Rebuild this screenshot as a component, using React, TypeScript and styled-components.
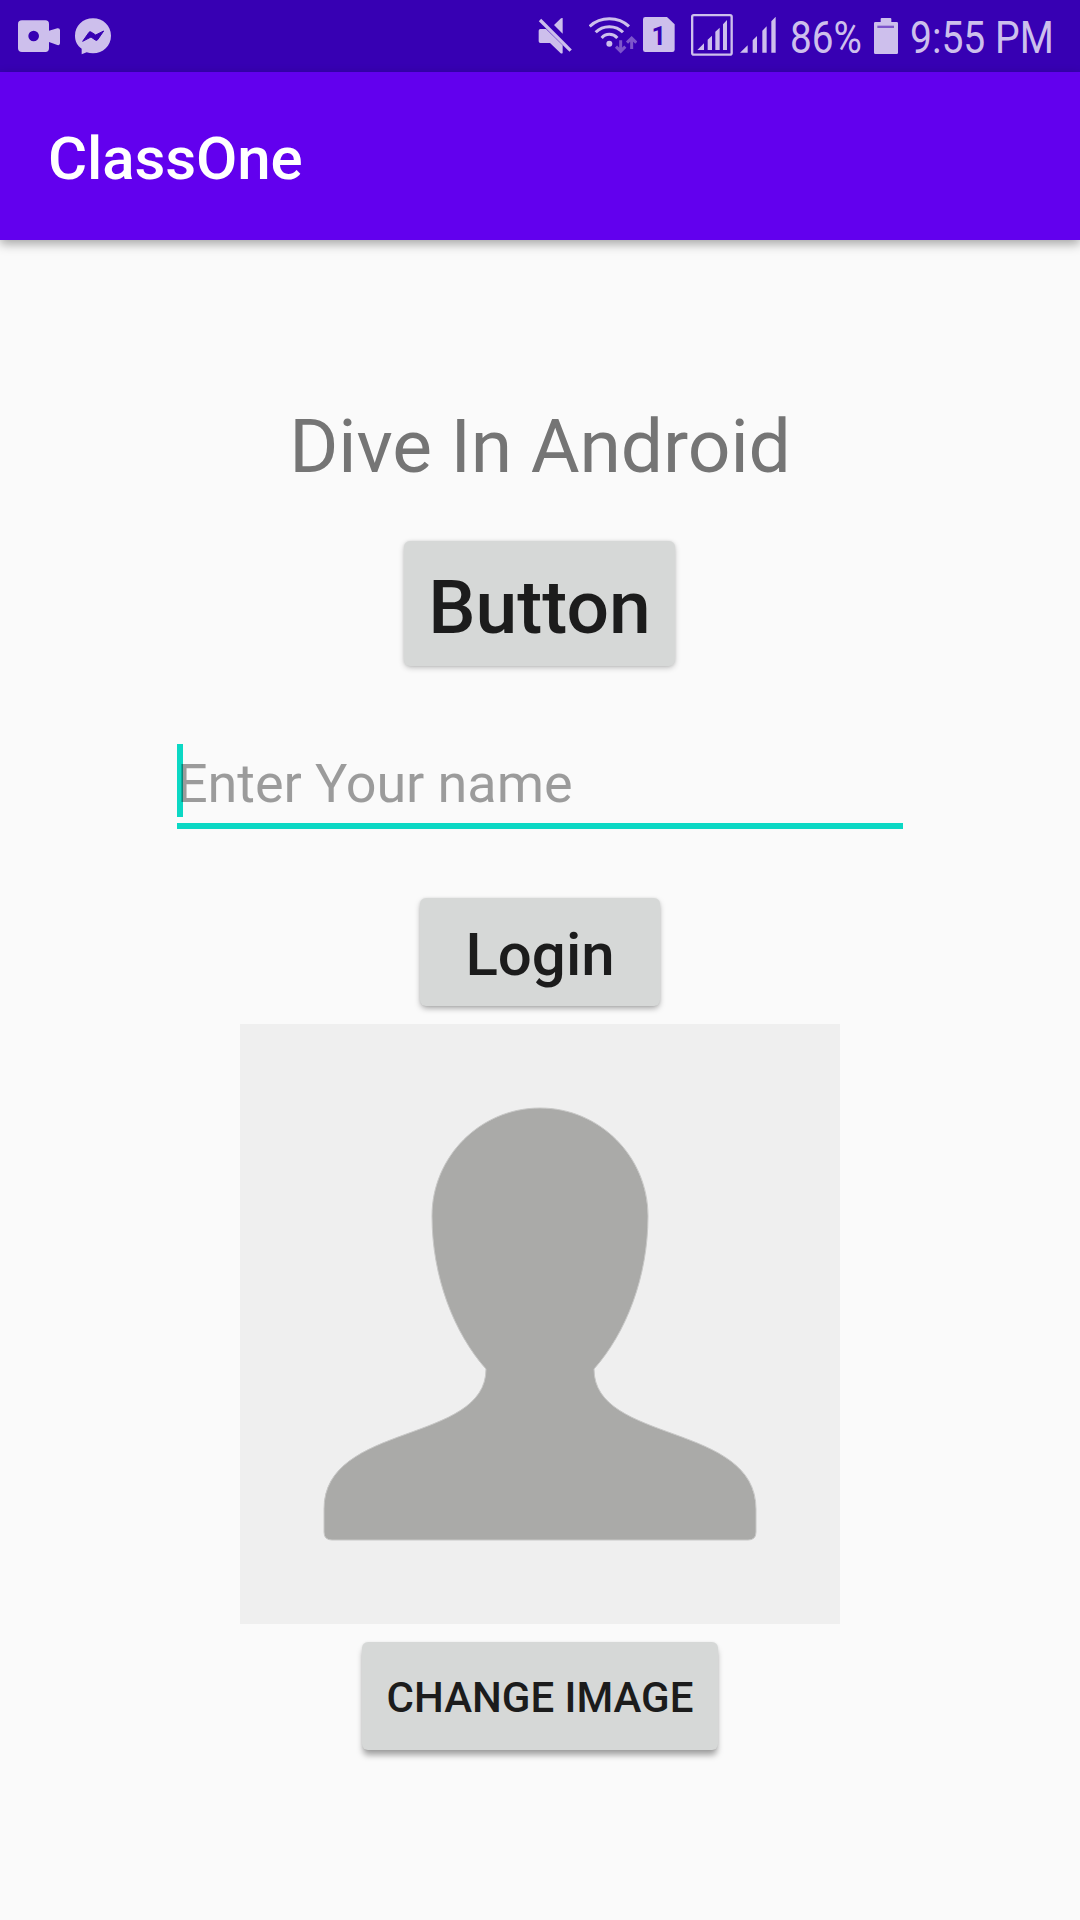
import React from "react";
import styled, { createGlobalStyle } from "styled-components";

const ICON = "#cdbfec";
const ICON_DIM = "#7d55cb";
const STATUS_BG = "#3700b3";
const ACCENT = "#0bd8c4";

const GlobalStyle = createGlobalStyle`
  * { box-sizing: border-box; }
  body { margin: 0; background: #fafafa; font-family: Roboto, "Noto Sans", sans-serif; }
`;

const Screen = styled.div`
  display: flex;
  flex-direction: column;
  width: 1080px;
  height: 1920px;
  overflow: hidden;
  background: #fafafa;
`;

const StatusBar = styled.header`
  display: flex;
  align-items: flex-start;
  flex: none;
  height: 72px;
  padding-left: 18px;
  background: ${STATUS_BG};
`;

const StatusIcon = styled.svg<{ $gap?: number }>`
  display: block;
  flex: none;
  height: 72px;
  margin-left: ${(p) => p.$gap ?? 0}px;
`;

const StatusText = styled.span<{ $gap: number; $width: number; $squeeze: number }>`
  display: block;
  flex: none;
  width: ${(p) => p.$width}px;
  margin-left: ${(p) => p.$gap}px;
  padding-top: 11px;
  font-size: 45px;
  line-height: 54px;
  color: ${ICON};
  white-space: nowrap;
  transform: scaleX(${(p) => p.$squeeze});
  transform-origin: left center;
`;

const AppBar = styled.div`
  display: flex;
  align-items: center;
  flex: none;
  height: 168px;
  padding: 6px 48px 0;
  background: #6200ee;
  box-shadow: 0 4px 10px rgba(0, 0, 0, 0.34);
`;

const AppTitle = styled.h1`
  margin: 0;
  font-size: 60px;
  font-weight: 500;
  line-height: 70px;
  letter-spacing: -0.12px;
  color: #fff;
`;

const Content = styled.main`
  display: flex;
  flex-direction: column;
  align-items: center;
  padding-top: 156px;
`;

const Heading = styled.p`
  margin: 0;
  font-size: 75px;
  line-height: 100px;
  letter-spacing: -0.08px;
  color: #757575;
  white-space: nowrap;
`;

const RaisedButton = styled.button<{
  $width: number;
  $height: number;
  $size: number;
  $top: number;
  $shift: number;
  $right?: number;
  $drop?: number;
  $shade?: number;
}>`
  display: flex;
  align-items: center;
  justify-content: center;
  flex: none;
  width: ${(p) => p.$width}px;
  height: ${(p) => p.$height}px;
  margin: ${(p) => p.$top}px ${(p) => p.$right ?? 0}px 0 0;
  padding: ${(p) => p.$shift}px 0 0;
  border: 0;
  border-radius: 6px;
  background: #d6d8d7;
  box-shadow: 0 ${(p) => p.$drop ?? 2}px 6px -1px rgba(0, 0, 0, ${(p) => p.$shade ?? 0.3}),
    0 0 3px rgba(0, 0, 0, 0.08);
  font-family: inherit;
  font-size: ${(p) => p.$size}px;
  font-weight: 500;
  color: #1c1c1c;
  white-space: nowrap;
`;

const NameField = styled.label`
  display: flex;
  position: relative;
  flex: none;
  width: 726px;
  height: 85px;
  margin-top: 78px;
  border-bottom: 6px solid ${ACCENT};
`;

const Caret = styled.i`
  position: absolute;
  left: 0;
  top: 0;
  width: 6px;
  height: 73px;
  background: ${ACCENT};
`;

const NameInput = styled.input`
  position: relative;
  width: 100%;
  height: 79px;
  padding: 0;
  border: 0;
  outline: 0;
  background: transparent;
  font-family: inherit;
  font-size: 54px;
  letter-spacing: -0.08px;
  &::placeholder {
    color: rgba(0, 0, 0, 0.38);
    opacity: 1;
  }
`;

const Portrait = styled.div`
  flex: none;
  width: 600px;
  height: 600px;
  margin-top: 18px;
  background: #efefef;
`;

export default function App() {
  return (
    <Screen>
      <GlobalStyle />
      <StatusBar>
        <StatusIcon width="42" viewBox="54 0 126 216" fill={ICON}>
          <path
            fillRule="evenodd"
            d="M66 61H136Q147 61 147 72V92L172 85Q180 84 180 91V130Q180 137 172 135L147 126V145Q147 156 136 156H66Q54 156 54 145V72Q54 61 66 61ZM101 92A16 16 0 1 0 101 124A16 16 0 1 0 101 92Z"
          />
        </StatusIcon>
        <StatusIcon width="36" viewBox="225 0 108 216" $gap={15}>
          <path
            fill={ICON}
            d="M279 55C309 55 333 77 333 107C333 137 309 160 279 160C272 160 266 159 260 157L245 163V146C232 137 225 124 225 107C225 77 249 55 279 55Z"
          />
          <path
            fill={STATUS_BG}
            stroke={STATUS_BG}
            strokeWidth="3"
            strokeLinejoin="round"
            d="M248 124L267 97Q269 94 273 96L287 105L311 93L293 119Q290 123 286 120L273 111Z"
          />
        </StatusIcon>

        <StatusIcon width="34" viewBox="55 0 102 216" $gap={427.3} fill={ICON}>
          <path d="M129 54V101L103 75L124 55ZM62 87H79L129 136V158Q128 162 123 160L91 129H62Q57 129 57 124V92Q57 87 62 87Z" />
          <path stroke={ICON} strokeWidth="10" d="M61 60L153 152" />
        </StatusIcon>
        <StatusIcon width="48" viewBox="207 0 144 216" $gap={16.7} fill="none">
          <g stroke={ICON} strokeWidth="9">
            <path d="M209 79Q233 56 268 56Q303 56 327 79" />
            <path d="M227 97Q243 80 268 80Q293 80 309 97" />
            <path d="M245 114Q254 103 268 103Q282 103 292 114" />
          </g>
          <circle cx="268" cy="131" r="9" fill={ICON} />
          <g stroke={ICON_DIM} strokeWidth="9">
            <path d="M302 121V152M288 140L302 154L316 140" />
            <path d="M335 147V116M321 128L335 114L349 128" />
          </g>
        </StatusIcon>
        <StatusIcon width="32" viewBox="370 0 96 216" $gap={6.3} fill={ICON}>
          <path d="M377 51H442L465 73V149Q465 156 458 156H377Q370 156 370 149V58Q370 51 377 51Z" />
          <text x="417" y="134" fill={STATUS_BG} fontSize="76" fontWeight="700" textAnchor="middle">
            1
          </text>
        </StatusIcon>
        <StatusIcon width="42" viewBox="513 0 126 216" $gap={15.7} fill={ICON}>
          <rect x="516.5" y="45.5" width="118.5" height="118.5" rx="5" fill="none" stroke={ICON} strokeWidth="7" />
          <path d="M532 150L552 130V150ZM563 150V119L576 107V150ZM586 150V95L599 83V150ZM609 150V73L621 60V150Z" />
        </StatusIcon>
        <StatusIcon width="36" viewBox="661 0 108 216" $gap={7.3} fill={ICON}>
          <path d="M661 158L684 136V158ZM699 158V121L712 108V158ZM728 158V92L741 79V158ZM755 158V64L768 50V158Z" />
        </StatusIcon>
        <StatusText $gap={14} $width={80} $squeeze={0.86}>
          86%
        </StatusText>
        <StatusIcon width="24" viewBox="282 0 72 216" $gap={4}>
          <path
            fill={ICON}
            d="M305 54H331Q334 54 334 57V66H350Q354 66 354 70V158Q354 162 350 162H286Q282 162 282 158V70Q282 66 286 66H302V57Q302 54 305 54Z"
          />
          <path fill={ICON_DIM} d="M292 77H342V84H292Z" />
        </StatusIcon>
        <StatusText $gap={12} $width={150} $squeeze={0.868}>
          9:55 PM
        </StatusText>
      </StatusBar>

      <AppBar>
        <AppTitle>ClassOne</AppTitle>
      </AppBar>

      <Content>
        <Heading>Dive In Android</Heading>
        <RaisedButton $width={271} $height={125} $size={75} $top={45} $shift={7} $right={1}>
          Button
        </RaisedButton>
        <NameField>
          <Caret />
          <NameInput placeholder="Enter Your name" />
        </NameField>
        <RaisedButton $width={240} $height={108} $size={60} $top={69} $shift={5} $drop={3} $shade={0.36}>
          Login
        </RaisedButton>
        <Portrait>
          <svg width="600" height="600" viewBox="0 0 600 600">
            <path
              fill="#aaaaa8"
              stroke="#c8c8c7"
              strokeWidth="1"
              d="M300 84C359.500 84 408 132.500 408 192C408 253 386 309 354 345C354 420 516 398 516 485V508Q516 516 508 516H92Q84 516 84 508V485C84 398 246 420 246 345C214 309 192 253 192 192C192 132.500 240.500 84 300 84Z"
            />
          </svg>
        </Portrait>
        <RaisedButton $width={356} $height={108} $size={42} $top={18} $shift={3} $drop={6} $shade={0.36}>
          CHANGE IMAGE
        </RaisedButton>
      </Content>
    </Screen>
  );
}
